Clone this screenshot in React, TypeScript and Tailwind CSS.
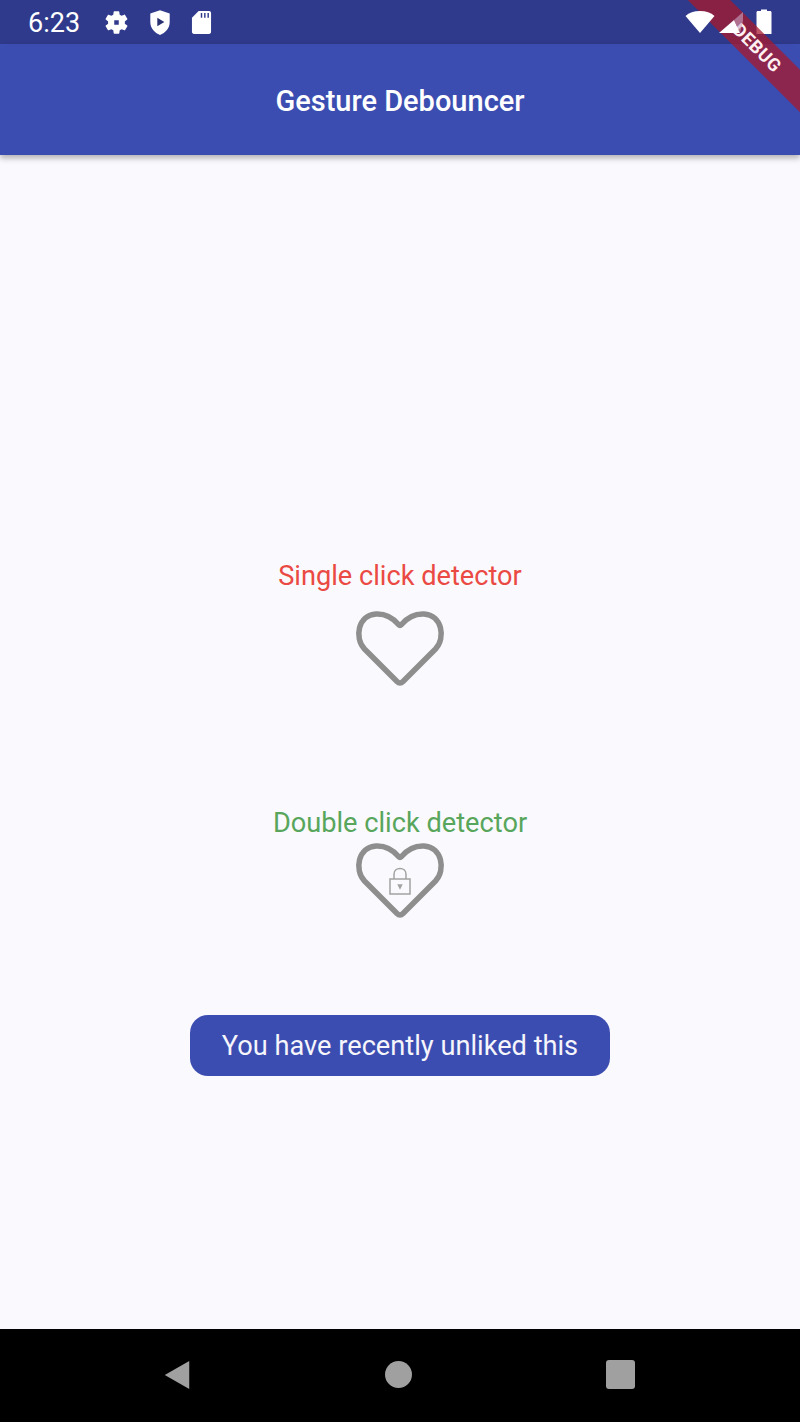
import React from 'react';

const HeartIcon: React.FC<{ locked?: boolean }> = ({ locked }) => {
  return (
    <svg width="90" height="77" viewBox="0 0 90 77" fill="none">
      <path
        d="M45 73 C44 73 43 72.500 42 71.500 L9.500 39 C-1 28 3 5 21 4 C31 3.500 38 8 43.500 14.500 C44.500 15.500 45.500 15.500 46.500 14.500 C52 8 59 3.500 69 4 C87 5 91 28 80.500 39 L48 71.500 C47 72.500 46 73 45 73 Z"
        stroke="#8e8e8e"
        strokeWidth="5.500"
        strokeLinejoin="round"
      />
      {locked && (
        <g stroke="#a2a2a2" strokeWidth="1.500" fill="none">
          <rect x="35" y="37" width="20" height="15" />
          <path d="M39 37 V32 C39 24.500 51 24.500 51 32 V37" />
          <path d="M43.500 43 H46.500 L45 46 Z" fill="#a2a2a2" />
        </g>
      )}
    </svg>
  );
};

const StatusBar: React.FC = () => {
  return (
    <div className="flex h-[44px] items-center bg-[#2f3a8c] pl-[28px] pr-[28px] text-white">
      <span className="w-[52px] pt-[3px] text-[27px] font-normal leading-none">6:23</span>
      <svg className="ml-[23px]" width="27" height="27" viewBox="0 0 24 24" fill="white">
        <path d="M19.400 13c.040-.320.060-.660.060-1s-.020-.680-.060-1l2.100-1.650c.190-.150.240-.420.120-.640l-2-3.460c-.120-.220-.390-.300-.610-.220l-2.490 1c-.520-.400-1.080-.730-1.690-.980l-.380-2.650A.488.488 0 0 0 14 2h-4c-.250 0-.460.180-.490.420l-.380 2.650c-.610.250-1.170.590-1.690.980l-2.490-1a.566.566 0 0 0-.610.220l-2 3.460c-.130.220-.070.490.120.640L4.570 11c-.040.320-.070.650-.070 1s.030.680.070 1l-2.110 1.650c-.190.150-.240.420-.120.640l2 3.460c.120.220.390.300.610.220l2.490-1c.520.400 1.080.730 1.690.980l.380 2.650c.030.240.240.420.490.420h4c.250 0 .460-.180.490-.420l.380-2.650c.610-.250 1.170-.590 1.690-.980l2.490 1c.230.090.490 0 .610-.220l2-3.460c.120-.220.070-.490-.120-.640L19.400 13z" />
        <rect x="10" y="10" width="4" height="4" fill="#2f3a8c" />
      </svg>
      <svg className="ml-[17px]" width="26" height="28" viewBox="0 0 24 26" fill="white">
        <path d="M12 2 L3 5 V13 C3 19 7 23 12 25 C17 23 21 19 21 13 V5 Z" />
        <path d="M9.500 9 L16 13 L9.500 17 Z" fill="#28306f" />
      </svg>
      <svg className="ml-[18px]" width="21" height="25" viewBox="0 0 22 26" fill="white">
        <path d="M8 1 H19 C20 1 21 2 21 3 V23 C21 24 20 25 19 25 H3 C2 25 1 24 1 23 V8 Z" />
        <path d="M11 3 V8 M14.500 3 V8 M18 3 V8" stroke="#2f3a8c" strokeWidth="1.500" />
      </svg>
      <div className="flex-1" />
      <svg className="relative z-10" width="30" height="24" viewBox="0 0 30 24" fill="white">
        <path d="M15 23 L0.500 6 C4 2.500 9 1 15 1 C21 1 26 2.500 29.500 6 Z" />
      </svg>
      <svg className="relative z-10 ml-[4px] mt-[2px]" width="24" height="24" viewBox="0 0 24 24" fill="white">
        <path d="M0 22 L15 9 L21 22 Z" />
        <path d="M15 9 L24 1 V10 L21 22 Z" fill="#c9a7c4" fillOpacity="0.6" />
      </svg>
      <svg className="ml-[13px]" width="16" height="26" viewBox="0 0 16 26" fill="white">
        <path d="M5 2 V0.500 H11 V2 H14 C15 2 15.500 2.500 15.500 3.500 V25 H0.500 V3.500 C0.500 2.500 1 2 2 2 Z" />
      </svg>
    </div>
  );
};

const DebugBanner: React.FC = () => {
  return (
    <div className="pointer-events-none absolute right-0 top-0 h-[130px] w-[130px] overflow-hidden">
      <div className="absolute left-[-23px] top-[33px] flex h-[30px] w-[220px] rotate-45 items-center justify-center bg-[#a81a2e]/75">
        <span className="text-[18px] font-bold leading-none tracking-[0.5px] text-[#fff1f1]">DEBUG</span>
      </div>
    </div>
  );
};

export default function App() {
  return (
    <div className="relative flex h-[1422px] w-[800px] flex-col overflow-hidden bg-[#faf9fd] font-['Roboto',sans-serif]">
      <StatusBar />
      <div className="flex h-[111px] items-center justify-center bg-[#3c4db1] pt-[3px] shadow-[0_3px_6px_rgba(0,0,0,0.3)]">
        <h1 className="text-[29px] font-medium leading-none text-white">Gesture Debouncer</h1>
      </div>

      <main className="flex flex-1 flex-col items-center pt-[406px]">
        <p className="text-[27.200px] leading-[30px] text-[#ea4a43]">Single click detector</p>
        <div className="mt-[19px]">
          <HeartIcon />
        </div>
        <p className="mt-[121px] text-[27.200px] leading-[30px] text-[#58a65c]">Double click detector</p>
        <div className="mt-[4px]">
          <HeartIcon locked />
        </div>
        <div className="mt-[96px] flex h-[61px] w-[420px] items-center justify-center rounded-[18px] bg-[#3c4db1] pt-[2px]">
          <span className="text-[27.200px] leading-none text-[#f5f5fb]">You have recently unliked this</span>
        </div>
      </main>

      <nav className="flex h-[93px] items-center justify-between bg-black pb-[2px] pl-[163px] pr-[165px]">
        <svg width="28" height="32" viewBox="0 0 28 34" fill="#a0a0a0">
          <path d="M1 17 L27 2 V32 Z" />
        </svg>
        <div className="h-[27px] w-[27px] rounded-full bg-[#a0a0a0]" />
        <div className="h-[29px] w-[29px] rounded-[3px] bg-[#a0a0a0]" />
      </nav>

      <DebugBanner />
    </div>
  );
}
